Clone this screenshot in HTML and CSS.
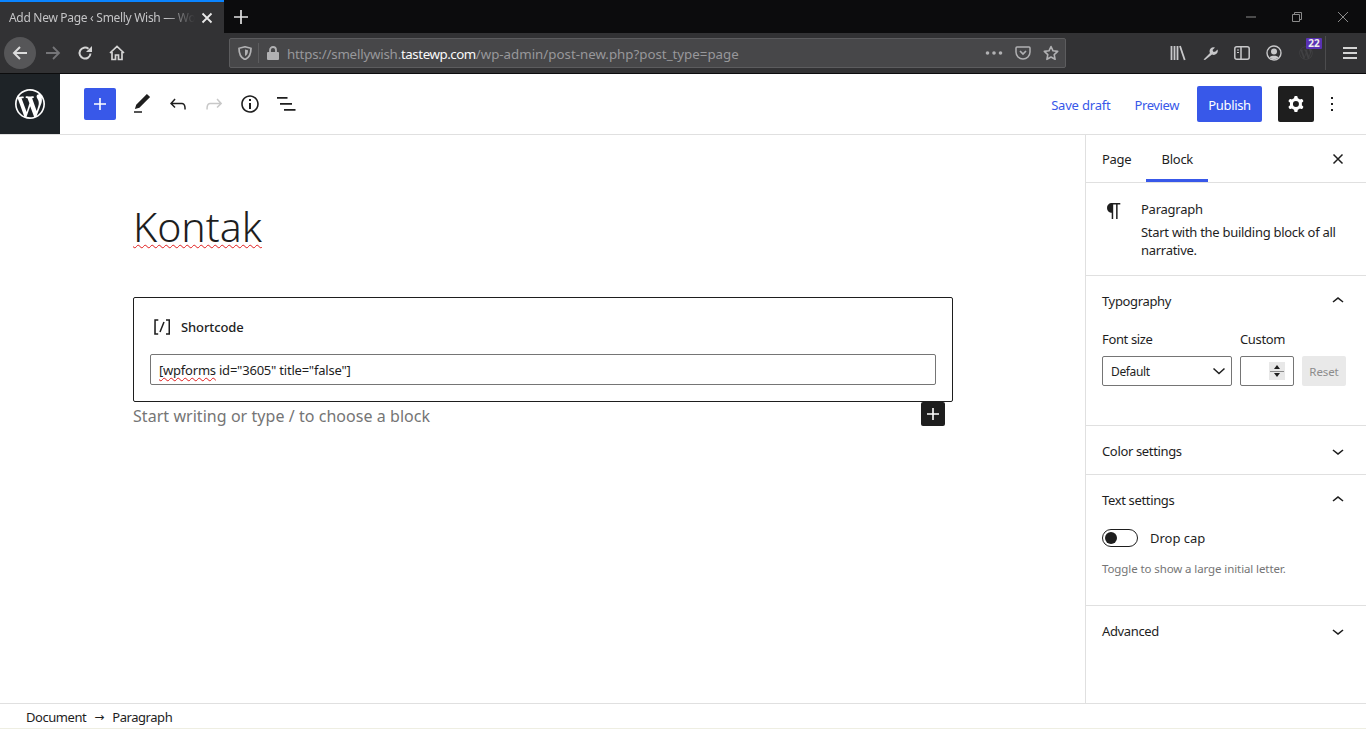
FILE: index.html
```html
<!DOCTYPE html>
<html lang="en">
<head>
<meta charset="utf-8">
<title>Add New Page</title>
<link rel="stylesheet" href="styles.css">
</head>
<body>
<div class="tabstrip">
  <div class="tab"><span class="tab-title">Add New Page ‹ Smelly Wish — WordPress</span>
    <svg class="tab-close" width="12" height="12" viewBox="0 0 12 12"><path d="M1.5 1.5l9 9m0-9l-9 9" stroke="#e8e8e8" stroke-width="1.8" fill="none"/></svg>
  </div>
  <svg class="newtab" width="14" height="14" viewBox="0 0 14 14"><path d="M7 0v14M0 7h14" stroke="#e2e2e2" stroke-width="1.7"/></svg>
  <div class="winctl">
    <svg width="46" height="12" viewBox="0 0 46 12"><path d="M18 6h10" stroke="#8a8a8a"/></svg>
    <svg width="46" height="12" viewBox="0 0 46 12"><path d="M18.500 3.500h7v7h-7zM20.500 3.500v-2h7v7h-2" stroke="#8a8a8a" fill="none"/></svg>
    <svg width="46" height="12" viewBox="0 0 46 12"><path d="M18 1l10 10m0-10L18 11" stroke="#8a8a8a" fill="none"/></svg>
  </div>
</div>
<div class="navbar">
  <div class="navbtn back"><svg width="18" height="18" viewBox="0 0 18 18"><path d="M16 9H3M9 3L3 9l6 6" stroke="#dcdcdc" stroke-width="2" fill="none"/></svg></div>
  <div class="navbtn"><svg width="18" height="18" viewBox="0 0 18 18"><path d="M2 9h13M9 3l6 6-6 6" stroke="#757578" stroke-width="1.800" fill="none"/></svg></div>
  <div class="navbtn"><svg width="16" height="16" viewBox="0 0 16 16"><path d="M13.500 8.500A5.500 5.500 0 1 1 11.500 3.800" stroke="#d4d4d4" stroke-width="2" fill="none"/><path d="M15 1v6H9z" fill="#d4d4d4"/></svg></div>
  <div class="navbtn"><svg width="16" height="16" viewBox="0 0 16 16"><path d="M1 8l7-6.500L15 8M3 7v7.500h3.500V10h3v4.500H13V7" stroke="#d4d4d4" stroke-width="1.700" fill="none"/></svg></div>
  <div class="urlbar">
    <svg class="shield" width="14" height="14" viewBox="0 0 14 14"><path d="M7 .8l6 1.500c0 6-1.500 9.500-6 11.200C2.500 11.800 1 8.300 1 2.300z" stroke="#b1b1b3" stroke-width="1.700" fill="none"/><path d="M7 3.500l3 .8c0 3-.8 4.800-3 5.800z" fill="#b1b1b3"/></svg>
    <span class="url-sep"></span>
    <svg class="lock" width="12" height="14" viewBox="0 0 12 14"><path d="M3 6V4a3 3 0 0 1 6 0v2" stroke="#b1b1b3" stroke-width="1.800" fill="none"/><rect y="6" width="12" height="8" rx="1" fill="#b1b1b3"/></svg>
    <span class="url">https://smellywish.<b class="url-host">tastewp.com</b><span class="url-path">/wp-admin/post-new.php?post_type=page</span></span>
    <svg class="url-ico" width="18" height="4" viewBox="0 0 18 4"><circle cx="2.500" cy="2" r="1.800" fill="#b1b1b3"/><circle cx="9" cy="2" r="1.800" fill="#b1b1b3"/><circle cx="15.500" cy="2" r="1.800" fill="#b1b1b3"/></svg>
    <svg class="url-ico pocket" width="16" height="14" viewBox="0 0 16 14"><path d="M2 1h12a1 1 0 0 1 1 1v4a7 7 0 0 1-14 0V2a1 1 0 0 1 1-1z" stroke="#b1b1b3" stroke-width="1.500" fill="none"/><path d="M5 5l3 3 3-3" stroke="#b1b1b3" stroke-width="1.700" fill="none"/></svg>
    <svg class="url-ico star" width="16" height="16" viewBox="0 0 16 16"><path d="M8 1.500l2 4.300 4.700.6-3.500 3.200.9 4.700L8 12l-4.100 2.300.9-4.700L1.300 6.400 6 5.800z" stroke="#b1b1b3" stroke-width="1.600" stroke-linejoin="round" fill="none"/></svg>
  </div>
  <div class="navbtn first-right"><svg width="16" height="16" viewBox="0 0 16 16"><path d="M1.500 1v14M4.500 1v14M7.500 1v14" stroke="#c8c8ca" stroke-width="1.800"/><path d="M10 1l4.700 14" stroke="#c8c8ca" stroke-width="1.800"/></svg></div>
  <div class="navbtn"><svg width="16" height="16" viewBox="0 0 16 16"><path d="M1.500 14.500l6.500-6.500a4 4 0 0 1 5-5.500l-2.500 2.500 1 2 2-.5 2-2a4 4 0 0 1-5.500 5L3 15z" fill="#c8c8ca"/></svg></div>
  <div class="navbtn"><svg width="16" height="14" viewBox="0 0 16 14"><rect x=".8" y=".8" width="14.400" height="12.400" rx="2" stroke="#c8c8ca" stroke-width="1.500" fill="none"/><path d="M7 1v12" stroke="#c8c8ca" stroke-width="1.500"/><path d="M3 4h2M3 6.500h2" stroke="#c8c8ca"/></svg></div>
  <div class="navbtn"><svg width="16" height="16" viewBox="0 0 16 16"><circle cx="8" cy="8" r="7" stroke="#c8c8ca" stroke-width="1.400" fill="none"/><circle cx="8" cy="6.500" r="3" fill="#c8c8ca"/><path d="M3.500 12.500c1-2.200 8-2.200 9 0-2 2-7 2-9 0z" fill="#c8c8ca"/></svg></div>
  <div class="navbtn ext">
    <svg width="16" height="16" viewBox="-2 -2 24 24" fill="#414143"><use href="#wplogo"/></svg>
    <span class="badge">22</span>
  </div>
  <span class="nav-sep"></span>
  <div class="navbtn"><svg width="14" height="12" viewBox="0 0 14 12"><path d="M0 1h14M0 6h14M0 11h14" stroke="#d4d4d4" stroke-width="1.800"/></svg></div>
</div>

<header class="edit-header">
  <div class="wp-box"><svg width="36" height="36" viewBox="-2 -2 24 24" fill="#fff"><path id="wplogo" d="M20 10c0-5.510-4.490-10-10-10C4.480 0 0 4.490 0 10c0 5.520 4.480 10 10 10 5.510 0 10-4.480 10-10zM7.780 15.370L4.370 6.220c.55-.02 1.170-.08 1.170-.08.5-.06.44-1.130-.06-1.110 0 0-1.450.11-2.370.11-.18 0-.37 0-.58-.01C4.120 2.690 6.870 1.110 10 1.110c2.330 0 4.450.87 6.050 2.340-.68-.11-1.650.39-1.650 1.580 0 .74.45 1.360.9 2.100.35.61.55 1.360.55 2.460 0 1.490-1.400 5-1.400 5l-3.030-8.370c.54-.02.82-.17.82-.17.5-.05.44-1.250-.06-1.220 0 0-1.440.12-2.380.12-.87 0-2.330-.12-2.330-.12-.5-.03-.56 1.200-.06 1.220l.92.08 1.260 3.410zM17.410 10c.24-.64.74-1.870.43-4.250.7 1.290 1.050 2.710 1.050 4.250 0 3.290-1.730 6.240-4.400 7.780.97-2.590 1.940-5.200 2.920-7.780zM6.100 18.090C3.120 16.650 1.110 13.530 1.110 10c0-1.300.23-2.480.72-3.590C3.250 10.300 4.670 14.200 6.100 18.090zm4.030-6.630l2.580 6.980c-.86.29-1.760.45-2.710.45-.79 0-1.570-.11-2.290-.33.81-2.380 1.620-4.740 2.420-7.100z"/></svg></div>
  <div class="inserter"><svg width="24" height="24" viewBox="0 0 24 24"><path d="M18 11.200h-5.200V6h-1.600v5.200H6v1.600h5.200V18h1.600v-5.200H18z" fill="#fff"/></svg></div>
  <div class="tool"><svg width="24" height="24" viewBox="0 0 24 24"><path d="M20.100 5.100L16.900 2 6.200 12.700l-1.300 4.400 4.500-1.300L20.100 5.100zM4 20.800h8v-1.500H4v1.500z" fill="#1e1e1e"/></svg></div>
  <div class="tool"><svg width="24" height="24" viewBox="0 0 24 24"><path d="M18.300 11.700c-.6-.6-1.400-.9-2.300-.9H6.700l2.900-3.300-1.100-1-4.500 5L8.500 16l1-1-2.700-2.700H16c.5 0 .9.2 1.300.5 1 1 1 3.400 1 4.500v.3h1.500v-.2c0-1.500 0-4.300-1.500-5.700z" fill="#1e1e1e"/></svg></div>
  <div class="tool"><svg width="24" height="24" viewBox="0 0 24 24"><path d="M15.600 6.500l-1.100 1 2.900 3.300H8c-.9 0-1.700.3-2.300.9-1.400 1.500-1.400 4.200-1.400 5.600v.2h1.500v-.3c0-1.100 0-3.500 1-4.500.3-.3.700-.5 1.300-.5h9.200L14.500 15l1.100 1.100 4.600-4.600-4.600-5z" fill="#c8c8c8"/></svg></div>
  <div class="tool"><svg width="24" height="24" viewBox="0 0 24 24"><path d="M12 3.200c-4.800 0-8.800 3.900-8.800 8.800 0 4.800 3.900 8.800 8.800 8.800 4.800 0 8.800-3.900 8.800-8.800 0-4.800-4-8.800-8.800-8.800zm0 16c-4 0-7.200-3.300-7.200-7.200C4.800 8 8 4.800 12 4.800s7.200 3.300 7.200 7.200c0 4-3.200 7.200-7.200 7.200zM11 17h2v-6h-2v6zm0-8h2V7h-2v2z" fill="#1e1e1e"/></svg></div>
  <div class="tool"><svg width="24" height="24" viewBox="0 0 24 24"><path d="M3 5h10.500v1.700H3zM6 11h12v1.700H6zM10 17h11.500v1.700H10z" fill="#1e1e1e"/></svg></div>
  <div class="header-right">
    <span class="link save">Save draft</span>
    <span class="link preview">Preview</span>
    <span class="publish">Publish</span>
    <span class="settings"><svg width="24" height="24" viewBox="0 0 24 24"><path fill-rule="evenodd" clip-rule="evenodd" d="M10.289 4.836A1 1 0 0111.275 4h1.306a1 1 0 01.987.836l.244 1.466c.787.26 1.503.679 2.108 1.218l1.393-.522a1 1 0 011.216.437l.653 1.130a1 1 0 01-.23 1.273l-1.148.944a6.025 6.025 0 010 2.435l1.149.946a1 1 0 01.23 1.272l-.653 1.130a1 1 0 01-1.216.437l-1.394-.522c-.605.54-1.320.958-2.108 1.218l-.244 1.466a1 1 0 01-.987.836h-1.306a1 1 0 01-.986-.836l-.244-1.466a5.995 5.995 0 01-2.108-1.218l-1.394.522a1 1 0 01-1.217-.436l-.653-1.131a1 1 0 01.23-1.272l1.149-.946a6.026 6.026 0 010-2.435l-1.148-.944a1 1 0 01-.23-1.272l.653-1.131a1 1 0 011.217-.437l1.393.522a5.994 5.994 0 012.108-1.218l.244-1.466zM14.929 12a3 3 0 11-6 0 3 3 0 016 0z" fill="#fff"/></svg></span>
    <span class="more"><svg width="24" height="24" viewBox="0 0 24 24"><path d="M13 19h-2v-2h2v2zm0-6h-2v-2h2v2zm0-6h-2V5h2v2z" fill="#1e1e1e"/></svg></span>
  </div>
</header>

<div class="main">
  <main class="editor">
    <h1 class="post-title"><span class="misspelt">Kontak</span></h1>
    <div class="shortcode-block">
      <div class="sc-label"><svg width="24" height="24" viewBox="0 0 24 24"><path d="M16 4.200v1.500h2.500v12.500H16v1.500h4V4.200h-4zM4.200 19.800h4v-1.500H5.800V5.800h2.500V4.200h-4l-.1 15.600zm5.100-3.100l1.400.6 4-10-1.400-.6-4 10z" fill="#1e1e1e"/></svg><span>Shortcode</span></div>
      <div class="sc-input"><span class="misspelt-small">[wpforms</span> id="3605" title="false"]</div>
    </div>
    <div class="placeholder-row">
      <span class="placeholder">Start writing or type / to choose a block</span>
      <span class="block-add"><svg width="24" height="24" viewBox="0 0 24 24"><path d="M18 11.200h-5.200V6h-1.600v5.200H6v1.600h5.200V18h1.600v-5.200H18z" fill="#fff"/></svg></span>
    </div>
  </main>
  <aside class="sidebar">
    <div class="side-tabs">
      <span class="side-tab">Page</span>
      <span class="side-tab active">Block</span>
      <svg class="side-close" width="12" height="12" viewBox="0 0 12 12"><path d="M1.500 1.500l9 9m0-9l-9 9" stroke="#1e1e1e" stroke-width="1.500" fill="none"/></svg>
    </div>
    <div class="block-card">
      <svg width="24" height="24" viewBox="0 0 24 24"><path d="M18.300 4H9.900v-.1l-.9.2c-2.300.4-4 2.400-4 4.800s1.700 4.400 4 4.800l.7.1V20h1.500V5.500h2.900V20h1.500V5.500h2.700V4z" fill="#1e1e1e"/></svg>
      <div class="card-text">
        <div class="card-title">Paragraph</div>
        <div class="card-desc">Start with the building block of all narrative.</div>
      </div>
    </div>
    <section class="panel typography">
      <div class="panel-head"><span>Typography</span><svg width="24" height="24" viewBox="0 0 24 24"><path d="M6.500 12.400L12 8l5.500 4.400-.9 1.200L12 10l-4.500 3.600-1-1.200z" fill="#1e1e1e"/></svg></div>
      <div class="font-row">
        <div class="field-size"><div class="field-label">Font size</div>
          <div class="select"><span>Default</span><svg width="14" height="8" viewBox="0 0 14 8"><path d="M1.500 1.500L7 6.500l5.500-5" stroke="#1e1e1e" stroke-width="1.500" fill="none"/></svg></div>
        </div>
        <div class="field-custom"><div class="field-label">Custom</div>
          <div class="number"><span class="spin"><i class="up"></i><i class="spin-rule"></i><i class="down"></i></span></div>
        </div>
        <span class="reset">Reset</span>
      </div>
    </section>
    <section class="panel color"><div class="panel-head"><span>Color settings</span><svg width="24" height="24" viewBox="0 0 24 24"><path d="M17.500 11.600L12 16l-5.500-4.400.9-1.200L12 14l4.500-3.600 1 1.200z" fill="#1e1e1e"/></svg></div></section>
    <section class="panel textset">
      <div class="panel-head"><span>Text settings</span><svg width="24" height="24" viewBox="0 0 24 24"><path d="M6.500 12.400L12 8l5.500 4.400-.9 1.200L12 10l-4.500 3.600-1-1.200z" fill="#1e1e1e"/></svg></div>
      <div class="toggle-row"><span class="toggle"><i></i></span><span>Drop cap</span></div>
      <div class="help">Toggle to show a large initial letter.</div>
    </section>
    <section class="panel advanced"><div class="panel-head"><span>Advanced</span><svg width="24" height="24" viewBox="0 0 24 24"><path d="M17.500 11.600L12 16l-5.500-4.400.9-1.200L12 14l4.500-3.600 1 1.200z" fill="#1e1e1e"/></svg></div></section>
  </aside>
</div>
<footer class="crumbs"><span>Document</span><span class="arrow">→</span><span>Paragraph</span></footer>
</body>
</html>
```

FILE: styles.css
```css
* { box-sizing: border-box; }
html, body { height: 100%; }
body {
  margin: 0;
  height: 729px;
  overflow: hidden;
  display: flex;
  flex-direction: column;
  font-family: "Noto Sans", "Open Sans", sans-serif;
  color: #1e1e1e;
  background: #fff;
  font-size: 13px;
}
svg { display: block; flex: none; }

/* browser tab strip */
.tabstrip { height: 33px; flex: none; background: #0c0c0d; display: flex; align-items: stretch; }
.tab { width: 224px; background: #323234; border-top: 2px solid #0a84ff; display: flex; align-items: center; padding-left: 9px; position: relative; }
.tab-title { width: 186px; overflow: hidden; white-space: nowrap; font-size: 12px; letter-spacing: -.3px; color: #c4c4c6; -webkit-mask-image: linear-gradient(90deg, #000 84%, transparent 100%); mask-image: linear-gradient(90deg, #000 84%, transparent 100%); }
.tab-close { margin-left: 6px; }
.newtab { align-self: center; margin-left: 10px; }
.winctl { margin-left: auto; display: flex; align-items: center; }

/* browser nav bar */
.navbar { height: 41px; flex: none; background: #323234; border-bottom: 1px solid #0c0c0d; display: flex; align-items: center; padding-left: 4px; }
.navbtn { width: 32px; height: 32px; flex: none; display: flex; align-items: center; justify-content: center; position: relative; }
.back { background: #565658; border-radius: 50%; margin-right: 1px; }
.urlbar { width: 837px; height: 30px; margin-left: 96px; background: #474749; border: 1px solid #5c5c5e; border-radius: 2px; display: flex; align-items: center; padding-left: 8px; }
.url-sep { width: 1px; height: 20px; background: #5c5c5e; margin: 0 8px 0 6px; }
.url { font-size: 13.300px; letter-spacing: -.2px; color: #98989b; white-space: nowrap; margin-left: 8px; width: 698px; flex: none; padding-top: 1px; }
.url-host { font-weight: 400; color: #fafafa; letter-spacing: -.45px; }
.url-path { letter-spacing: 0; }
.pocket { margin-left: 12px; }
.star { margin-left: 12px; }
.first-right { margin-left: 96px; }
.badge { position: absolute; top: 1px; right: 0; width: 16px; height: 11px; background: #5a32b4; border-radius: 1px; font-size: 10px; line-height: 11px; font-weight: 700; color: #eee; text-align: center; }
.nav-sep { width: 1px; height: 34px; background: #4c4c4e; margin: 0 8px 0 3px; flex: none; }

/* editor header */
.edit-header { height: 61px; flex: none; background: #fff; border-bottom: 1px solid #e0e0e0; display: flex; align-items: center; }
.wp-box { width: 60px; height: 60px; background: #1e2327; display: flex; align-items: center; justify-content: center; flex: none; }
.inserter { width: 32px; height: 32px; margin-left: 24px; margin-right: 8px; background: #3858e9; border-radius: 2px; display: flex; align-items: center; justify-content: center; }
.tool { width: 36px; height: 36px; display: flex; align-items: center; justify-content: center; }
.header-right { margin-left: auto; display: flex; align-items: center; }
.link { color: #3858e9; font-size: 13px; padding-top: 1px; }
.save { margin-right: 24px; letter-spacing: -.2px; }
.preview { margin-right: 18px; letter-spacing: -.4px; }
.publish { width: 65px; height: 36px; padding-top: 1px; letter-spacing: -.35px; background: #3858e9; color: #fff; border-radius: 2px; display: flex; align-items: center; justify-content: center; margin-right: 16px; }
.settings { width: 36px; height: 36px; background: #1e1e1e; border-radius: 2px; display: flex; align-items: center; justify-content: center; margin-right: 6px; }
.more { width: 24px; margin-right: 22px; }

/* main */
.main { flex: 1; display: flex; min-height: 0; }
.editor { flex: 1; min-width: 0; padding: 0 0 0 133px; }
.post-title { margin: 65px 0 0; font-size: 41px; line-height: 52px; font-weight: 300; color: #1e1e1e; }
.misspelt { text-decoration: underline wavy #e01b1b 1px; text-underline-offset: 2px; text-decoration-skip-ink: none; }
.misspelt-small { text-decoration: underline wavy #e01b1b 1px; text-underline-offset: 2px; text-decoration-skip-ink: none; }
.shortcode-block { width: 820px; height: 105px; margin-top: 45px; border: 1px solid #1e1e1e; border-radius: 2px; padding: 16px 16px 0; }
.sc-label { display: flex; align-items: center; height: 26px; gap: 7px; font-size: 13px; font-weight: 500; letter-spacing: -.1px; }
.sc-input { height: 31px; margin-top: 14px; border: 1px solid #757575; border-radius: 2px; font-size: 13px; line-height: 29px; padding: 1px 0 0 8px; letter-spacing: -.22px; color: #1e1e1e; }
.placeholder-row { width: 820px; height: 30px; display: flex; position: relative; }
.placeholder { font-size: 16px; line-height: 28px; letter-spacing: .05px; color: #757575; }
.block-add { position: absolute; right: 8px; top: 0; width: 24px; height: 24px; background: #1e1e1e; border-radius: 2px; }

/* sidebar */
.sidebar { width: 281px; flex: none; border-left: 1px solid #e0e0e0; }
.side-tabs { height: 48px; border-bottom: 1px solid #e0e0e0; display: flex; align-items: stretch; padding-left: 16px; }
.side-tab { display: flex; align-items: center; height: 47px; font-size: 13px; letter-spacing: -.3px; }
.side-tab.active { margin-left: 15px; width: 62px; justify-content: center; box-shadow: inset 0 -3px 0 #3858e9; }
.side-close { margin-left: auto; margin-right: 22px; align-self: center; }
.block-card { height: 93px; border-bottom: 1px solid #e0e0e0; padding: 16px 16px 0 16px; display: flex; gap: 15px; }
.card-title { font-size: 13px; line-height: 20px; letter-spacing: -.25px; }
.card-desc { font-size: 13px; line-height: 18px; margin-top: 4px; letter-spacing: -.28px; }
.panel { border-bottom: 1px solid #e0e0e0; padding: 0 16px; letter-spacing: -.35px; }
.panel-head { height: 49px; display: flex; align-items: center; justify-content: space-between; }
.typography { height: 150px; }
.color { height: 49px; }
.textset { height: 131px; }
.advanced { border-bottom: 0; }
.font-row { display: flex; align-items: flex-end; margin-top: 5px; }
.field-label { font-size: 13px; line-height: 18px; margin-bottom: 8px; }
.field-size { width: 130px; margin-right: 8px; }
.select { height: 30px; border: 1px solid #757575; border-radius: 2px; display: flex; align-items: center; justify-content: space-between; padding: 0 5px 0 8px; font-size: 12px; }
.field-custom { width: 54px; margin-right: 8px; }
.number { height: 30px; border: 1px solid #757575; border-radius: 2px; display: flex; align-items: center; justify-content: flex-end; padding-right: 8px; }
.spin { width: 16px; height: 18px; background: #e8e8e8; display: flex; flex-direction: column; align-items: center; justify-content: space-between; padding: 3px 1px; }
.spin i { display: block; }
.spin .up, .spin .down { width: 0; height: 0; border-left: 3.500px solid transparent; border-right: 3.500px solid transparent; }
.spin .up { border-bottom: 4px solid #1e1e1e; }
.spin .down { border-top: 4px solid #1e1e1e; }
.spin .spin-rule { width: 100%; height: 1px; background: #8a8a8a; }
.reset { width: 44px; height: 30px; background: #e9e9e9; border-radius: 2px; font-size: 11.500px; letter-spacing: -.1px; color: #8c8c8c; display: flex; align-items: center; justify-content: center; }
.toggle-row { display: flex; align-items: center; gap: 12px; height: 20px; margin-top: 4px; letter-spacing: 0; }
.toggle { width: 36px; height: 18px; border: 1px solid #1e1e1e; border-radius: 9px; position: relative; display: block; }
.toggle i { position: absolute; left: 2px; top: 2px; width: 12px; height: 12px; background: #1e1e1e; border-radius: 50%; }
.help { font-size: 11.500px; line-height: 16px; color: #757575; margin-top: 13px; letter-spacing: -.1px; }

/* footer */
.crumbs { height: 26px; flex: none; border-top: 1px solid #e0e0e0; border-bottom: 1px solid #eeeee2; display: flex; align-items: center; padding: 1px 0 0 26px; font-size: 13px; letter-spacing: -.45px; }
.arrow { margin: 0 8px; font-family: "DejaVu Sans", sans-serif; font-size: 12px; letter-spacing: 0; }
```
